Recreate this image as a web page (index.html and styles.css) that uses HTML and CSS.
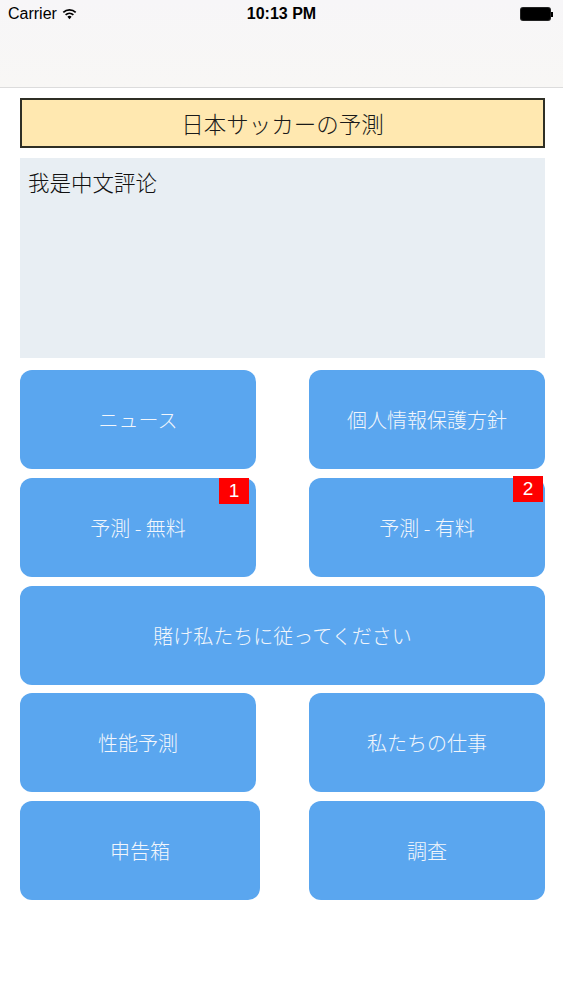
FILE: index.html
```html
<!DOCTYPE html>
<html lang="ja">
<head>
<meta charset="utf-8">
<title>日本サッカーの予測</title>
<link rel="stylesheet" href="styles.css">
</head>
<body>
<header class="topbar">
  <div class="status">
    <div class="carrier">Carrier
      <svg class="wifi" width="15" height="12" viewBox="0 0 15 12">
        <path d="M7.5 11.2 L5.4 8.7 A3.3 3.3 0 0 1 9.6 8.7 Z" fill="#000"/>
        <path d="M3.6 6.9 A5.7 5.7 0 0 1 11.4 6.9" fill="none" stroke="#000" stroke-width="1.7"/>
        <path d="M1.3 4.4 A9 9 0 0 1 13.7 4.4" fill="none" stroke="#000" stroke-width="1.7"/>
      </svg>
    </div>
    <div class="time">10:13 PM</div>
    <div class="battery"><span class="cell"></span><span class="tip"></span></div>
  </div>
</header>
<main class="content">
  <div class="title">日本サッカーの予測</div>
  <div class="comment">我是中文評论</div>
  <div class="buttons">
    <div class="row">
      <div class="btn">ニュース</div>
      <div class="btn">個人情報保護方針</div>
    </div>
    <div class="row">
      <div class="btn">予測 - 無料<span class="badge badge-left">1</span></div>
      <div class="btn">予測 - 有料<span class="badge badge-right">2</span></div>
    </div>
    <div class="row">
      <div class="btn wide">賭け私たちに従ってください</div>
    </div>
    <div class="row">
      <div class="btn">性能予測</div>
      <div class="btn">私たちの仕事</div>
    </div>
    <div class="row">
      <div class="btn btn-l">申告箱</div>
      <div class="btn">調査</div>
    </div>
  </div>
</main>
</body>
</html>
```

FILE: styles.css
```css
html, body {
  margin: 0;
  padding: 0;
  background: #ffffff;
}
body {
  font-family: "Noto Sans CJK JP", "Noto Sans", sans-serif;
  width: 563px;
}
.topbar {
  height: 87px;
  background: linear-gradient(#f7f6f8, #f8f7f5);
  border-bottom: 1px solid #dcdcdc;
}
.status {
  height: 28px;
  display: flex;
  align-items: center;
  justify-content: space-between;
  padding: 0 8px 0 8px;
  position: relative;
  font-family: "Liberation Sans", Arial, sans-serif;
  font-size: 16px;
  color: #000;
}
.carrier {
  display: flex;
  align-items: center;
  gap: 5px;
}
.wifi { margin-top: -1px; }
.time {
  position: absolute;
  left: 0;
  right: 0;
  text-align: center;
  font-weight: bold;
  pointer-events: none;
}
.battery {
  display: flex;
  align-items: center;
  margin-right: 2px;
}
.battery .cell {
  width: 29px;
  height: 12px;
  background: #000;
  border-radius: 2px;
  box-shadow: 0 0 0 1px #222;
}
.battery .tip {
  width: 2px;
  height: 5px;
  background: #000;
  margin-left: 1px;
}
.content {
  padding: 10px 18px 0 20px;
}
.title {
  height: 46px;
  border: 2px solid #2f2f25;
  background: #ffe8b0;
  display: flex;
  align-items: center;
  justify-content: center;
  font-size: 22.5px;
  font-weight: 300;
  color: #1a1a1a;
}
.comment {
  margin-top: 10px;
  height: 200px;
  background: #e8eef3;
  box-sizing: border-box;
  padding: 8px 8px;
  font-size: 21.5px;
  font-weight: 300;
  color: #111;
}
.buttons {
  margin-top: 12px;
  display: flex;
  flex-direction: column;
  gap: 8.75px;
}
.row {
  display: flex;
  justify-content: space-between;
}
.btn {
  position: relative;
  width: 236px;
  height: 99px;
  background: #5aa6ef;
  border-radius: 12px;
  color: #f2f6fc;
  font-size: 20px;
  font-weight: 300;
  display: flex;
  align-items: center;
  justify-content: center;
}
.btn.wide { width: 100%; }
.btn.btn-l { width: 240px; }
.badge {
  position: absolute;
  width: 30px;
  height: 26px;
  background: #ff0000;
  color: #fff;
  font-family: "Liberation Sans", Arial, sans-serif;
  font-size: 19px;
  display: flex;
  align-items: center;
  justify-content: center;
}
.badge-left { top: 0; right: 7px; }
.badge-right { top: -2px; right: 2px; }
```
